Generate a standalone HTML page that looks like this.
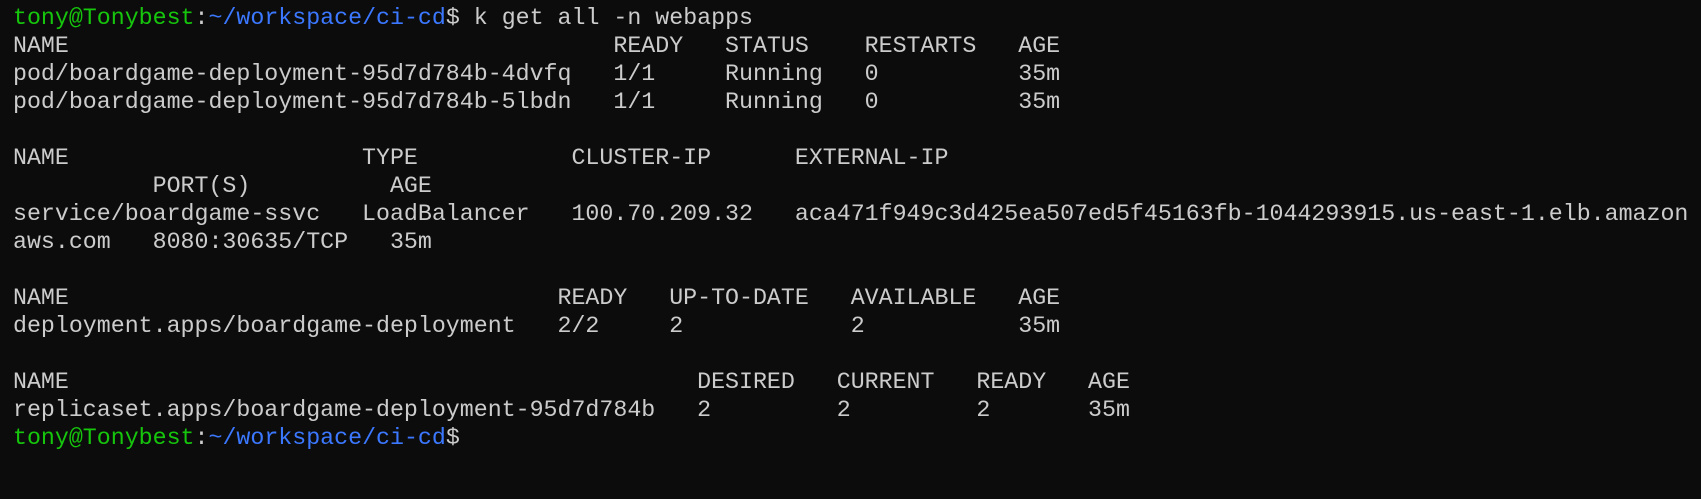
<!DOCTYPE html>
<html><head><meta charset="utf-8"><style>
html,body{margin:0;padding:0;background:#0c0c0c;width:1701px;height:499px;overflow:hidden}
pre{margin:0;padding:3.5px 0 0 13px;font-family:"Liberation Mono",monospace;font-size:23.28px;line-height:28px;color:#cccccc;white-space:pre}
.g{color:#16c60c}.b{color:#3b78ff}
</style></head><body><pre><span class="g">tony@Tonybest</span>:<span class="b">~/workspace/ci-cd</span>$ k get all -n webapps
NAME                                       READY   STATUS    RESTARTS   AGE
pod/boardgame-deployment-95d7d784b-4dvfq   1/1     Running   0          35m
pod/boardgame-deployment-95d7d784b-5lbdn   1/1     Running   0          35m

NAME                     TYPE           CLUSTER-IP      EXTERNAL-IP
          PORT(S)          AGE
service/boardgame-ssvc   LoadBalancer   100.70.209.32   aca471f949c3d425ea507ed5f45163fb-1044293915.us-east-1.elb.amazon
aws.com   8080:30635/TCP   35m

NAME                                   READY   UP-TO-DATE   AVAILABLE   AGE
deployment.apps/boardgame-deployment   2/2     2            2           35m

NAME                                             DESIRED   CURRENT   READY   AGE
replicaset.apps/boardgame-deployment-95d7d784b   2         2         2       35m
<span class="g">tony@Tonybest</span>:<span class="b">~/workspace/ci-cd</span>$</pre></body></html>
